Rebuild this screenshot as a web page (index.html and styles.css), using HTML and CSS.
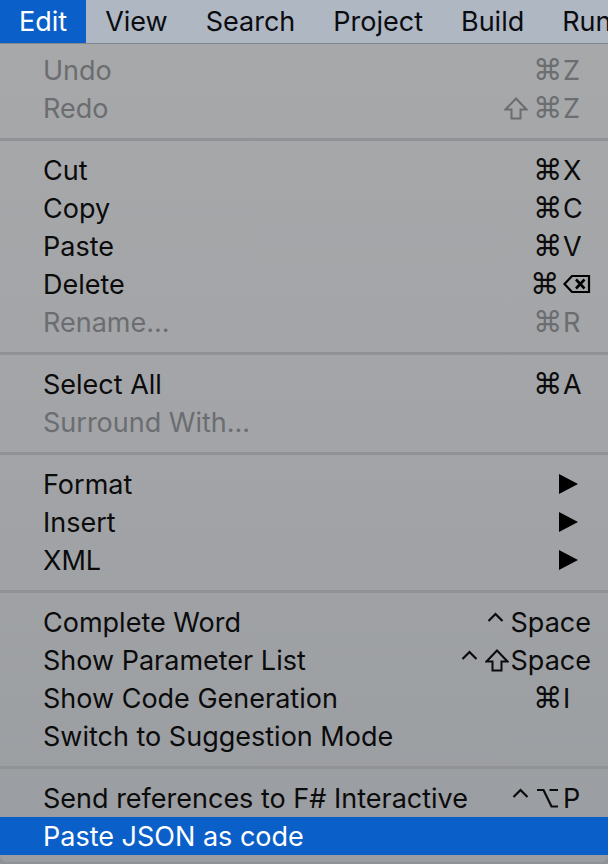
FILE: index.html
```html
<!DOCTYPE html>
<html>
<head>
<meta charset="utf-8">
<link rel="stylesheet" href="styles.css">
</head>
<body>
<div class="menubar">
  <span class="mb-item active">Edit</span>
  <span class="mb-item">View</span>
  <span class="mb-item">Search</span>
  <span class="mb-item">Project</span>
  <span class="mb-item">Build</span>
  <span class="mb-item">Run</span>
</div>
<div class="menu">
  <div class="row disabled"><span class="label">Undo</span><span class="sc"><span class="cmd">⌘</span><span class="key">Z</span></span></div>
  <div class="row disabled"><span class="label">Redo</span><span class="sc"><svg class="ic shift" width="24" height="23" viewBox="0 0 24 23"><path d="M12 1.5 L22.5 12.5 H16.5 V21.5 H7.5 V12.5 H1.5 Z" fill="none" stroke="currentColor" stroke-width="2" stroke-linejoin="miter"/></svg><span class="cmd">⌘</span><span class="key">Z</span></span></div>
  <div class="sep"></div>
  <div class="row"><span class="label">Cut</span><span class="sc"><span class="cmd">⌘</span><span class="key">X</span></span></div>
  <div class="row"><span class="label">Copy</span><span class="sc"><span class="cmd">⌘</span><span class="key">C</span></span></div>
  <div class="row"><span class="label">Paste</span><span class="sc"><span class="cmd">⌘</span><span class="key">V</span></span></div>
  <div class="row"><span class="label">Delete</span><span class="sc"><span class="cmd">⌘</span><span class="key"><svg class="del" width="28" height="20" viewBox="0 0 28 20"><path d="M9 2 H26 V18 H9 L1.5 10 Z" fill="none" stroke="#000" stroke-width="2.2" stroke-linejoin="miter"/><path d="M13 5.5 L21.5 14.5 M21.5 5.5 L13 14.5" stroke="#000" stroke-width="2.6"/></svg></span></span></div>
  <div class="row disabled"><span class="label">Rename...</span><span class="sc"><span class="cmd">⌘</span><span class="key">R</span></span></div>
  <div class="sep"></div>
  <div class="row"><span class="label">Select All</span><span class="sc"><span class="cmd">⌘</span><span class="key">A</span></span></div>
  <div class="row disabled"><span class="label">Surround With...</span></div>
  <div class="sep"></div>
  <div class="row"><span class="label">Format</span><span class="arrow"></span></div>
  <div class="row"><span class="label">Insert</span><span class="arrow"></span></div>
  <div class="row"><span class="label">XML</span><span class="arrow"></span></div>
  <div class="sep"></div>
  <div class="row"><span class="label">Complete Word</span><span class="sc"><svg class="ic ctrl" width="17" height="20" viewBox="0 0 17 20"><path d="M1.5 10 L8.5 3 L15.5 10" fill="none" stroke="currentColor" stroke-width="2.2"/></svg><span class="key">Space</span></span></div>
  <div class="row"><span class="label">Show Parameter List</span><span class="sc"><svg class="ic ctrl" width="17" height="20" viewBox="0 0 17 20"><path d="M1.5 10 L8.5 3 L15.5 10" fill="none" stroke="currentColor" stroke-width="2.2"/></svg><svg class="ic shift" width="24" height="23" viewBox="0 0 24 23"><path d="M12 1.5 L22.5 12.5 H16.5 V21.5 H7.5 V12.5 H1.5 Z" fill="none" stroke="currentColor" stroke-width="2" stroke-linejoin="miter"/></svg><span class="key">Space</span></span></div>
  <div class="row"><span class="label">Show Code Generation</span><span class="sc"><span class="cmd">⌘</span><span class="key">I</span></span></div>
  <div class="row"><span class="label">Switch to Suggestion Mode</span></div>
  <div class="sep"></div>
  <div class="row"><span class="label">Send references to F# Interactive</span><span class="sc"><svg class="ic ctrl" width="17" height="20" viewBox="0 0 17 20"><path d="M1.5 10 L8.5 3 L15.5 10" fill="none" stroke="currentColor" stroke-width="2.2"/></svg><svg class="ic opt" width="23" height="22" viewBox="0 0 23 22"><path d="M1 3 H7.5 L15.5 19.5 H22 M13.5 3 H22" fill="none" stroke="currentColor" stroke-width="2.2"/></svg><span class="key">P</span></span></div>
  <div class="row selected"><span class="label">Paste JSON as code</span></div>
</div>
</body>
</html>
```
FILE: styles.css
```css
html, body {
  margin: 0;
  padding: 0;
  background: #8f9296;
}
body {
  width: 608px;
  height: 864px;
  overflow: hidden;
  font-family: "Inter", "DejaVu Sans", sans-serif;
  font-size: 27px;
  color: #0b0b0c;
}
.menubar {
  height: 43px;
  background: #afb7c3;
  border-bottom: 1px solid #85888d;
  display: flex;
  align-items: stretch;
  white-space: nowrap;
}
.mb-item {
  padding: 0 19px;
  display: flex;
  align-items: center;
  color: #0a0c10;
}
.mb-item.active {
  background: #0a5fc8;
  color: #fff;
}
.menu {
  background: linear-gradient(to bottom, #a7a8aa 0%, #a2a4a7 50%, #9a9da1 100%);
  padding: 7px 0 6px;
  border-radius: 0 0 7px 7px;
  height: 818px;
  box-sizing: border-box;
}
.row {
  height: 38px;
  display: flex;
  align-items: center;
  padding: 0 17px 0 43px;
  white-space: nowrap;
}
.row.disabled {
  color: #6b6d70;
}
.row.selected {
  background: #0a5fc8;
  color: #fff;
}
.label {
  flex: 1;
}
.sc {
  display: flex;
  align-items: center;
}
.cmd {
  font-family: "DejaVu Sans", sans-serif;
  font-size: 29px;
  line-height: 1;
  margin-left: 3px;
  margin-right: 1px;
}
.ic {
  display: block;
}
.shift {
  margin-right: 2px;
}
.ctrl {
  margin-right: 7px;
  margin-top: -2px;
}
.opt {
  margin-right: 4px;
}
.key {
  min-width: 28px;
  display: flex;
  align-items: center;
}
.del {
  display: block;
  margin-left: 3px;
}
.arrow {
  width: 0;
  height: 0;
  border-top: 10px solid transparent;
  border-bottom: 10px solid transparent;
  border-left: 19px solid #000;
  margin-right: 13px;
}
.sep {
  height: 3px;
  background: #909295;
  margin: 11px 0 10px;
}
```
